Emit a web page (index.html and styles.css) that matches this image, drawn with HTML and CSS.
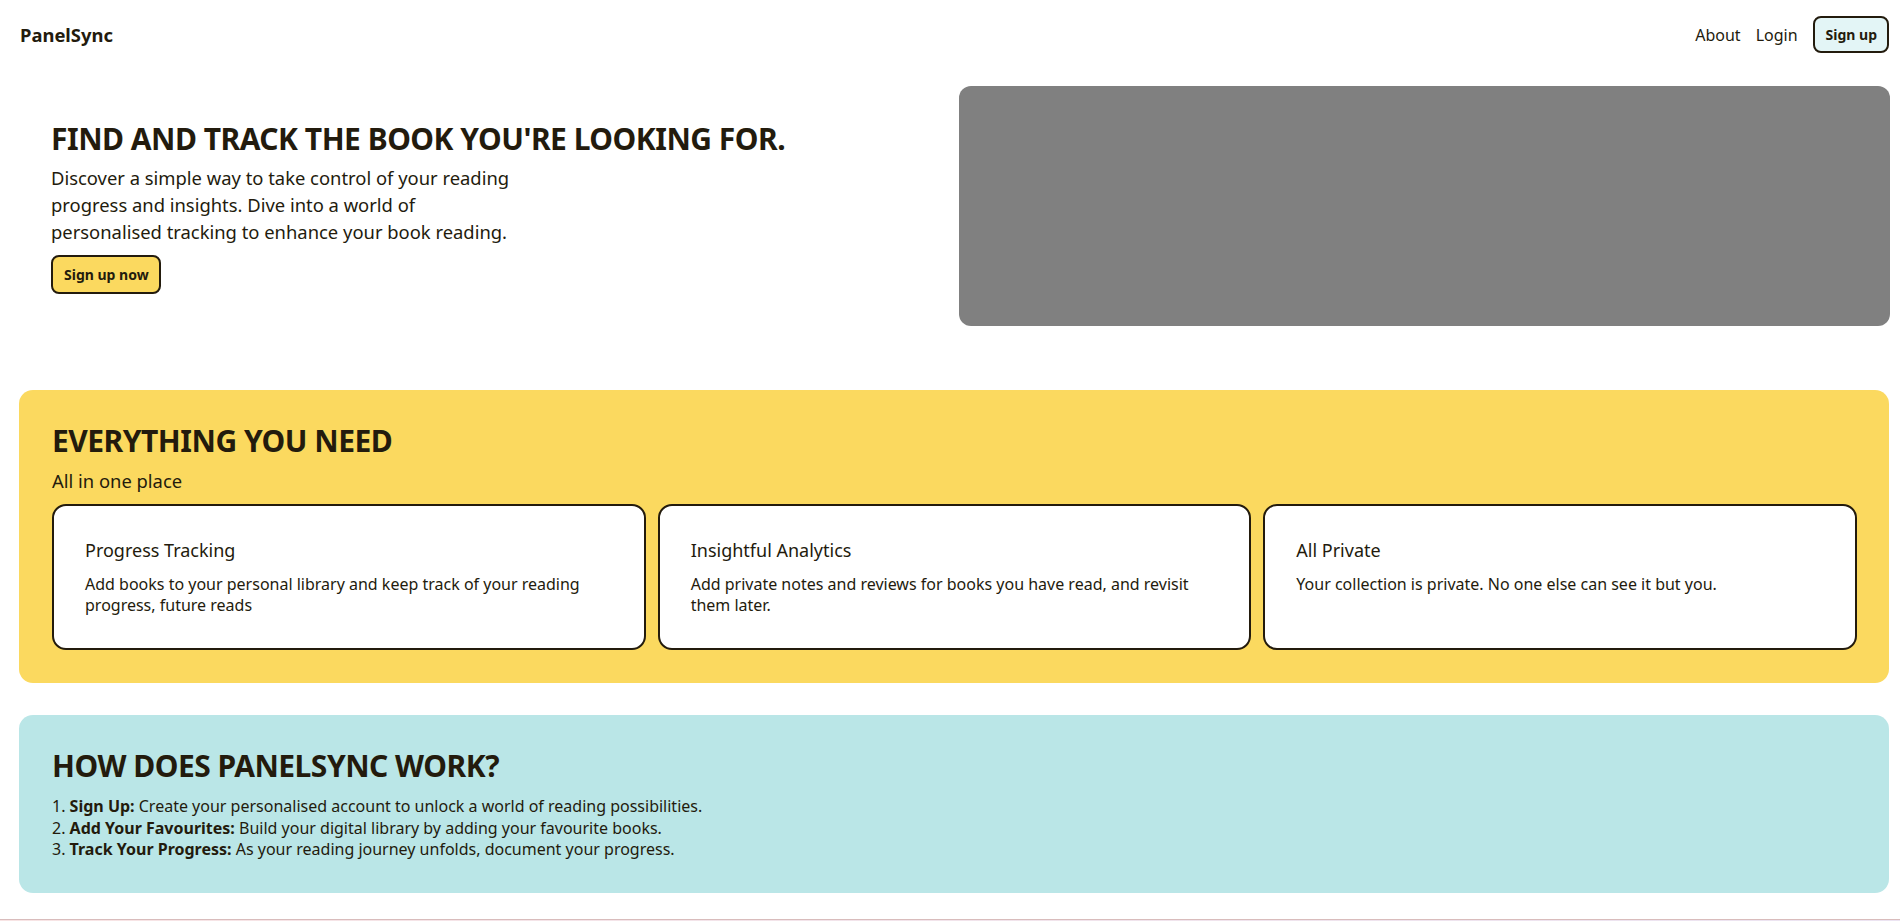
FILE: index.html
```html
<!DOCTYPE html>
<html lang="en">
<head>
<meta charset="utf-8">
<title>PanelSync</title>
<link rel="stylesheet" href="styles.css">
</head>
<body>
<header class="nav">
  <div class="brand">PanelSync</div>
  <nav class="nav-links">
    <a class="nav-link" href="#">About</a>
    <a class="nav-link" href="#">Login</a>
    <a class="btn btn-light" href="#">Sign up</a>
  </nav>
</header>
<main>
  <section class="hero">
    <div class="hero-text">
      <h1 class="title">FIND AND TRACK THE BOOK YOU'RE LOOKING FOR.</h1>
      <p class="lead">Discover a simple way to take control of your reading progress and insights. Dive into a world of personalised tracking to enhance your book reading.</p>
      <a class="btn btn-yellow" href="#">Sign up now</a>
    </div>
    <div class="hero-image"></div>
  </section>

  <section class="panel panel-yellow">
    <h2 class="title">EVERYTHING YOU NEED</h2>
    <p class="sub">All in one place</p>
    <div class="cards">
      <div class="card">
        <h3 class="card-title">Progress Tracking</h3>
        <p class="card-text">Add books to your personal library and keep track of your reading progress, future reads</p>
      </div>
      <div class="card">
        <h3 class="card-title">Insightful Analytics</h3>
        <p class="card-text">Add private notes and reviews for books you have read, and revisit them later.</p>
      </div>
      <div class="card">
        <h3 class="card-title">All Private</h3>
        <p class="card-text">Your collection is private. No one else can see it but you.</p>
      </div>
    </div>
  </section>

  <section class="panel panel-teal">
    <h2 class="title">HOW DOES PANELSYNC WORK?</h2>
    <ol class="steps">
      <li><b>Sign Up:</b> Create your personalised account to unlock a world of reading possibilities.</li>
      <li><b>Add Your Favourites:</b> Build your digital library by adding your favourite books.</li>
      <li><b>Track Your Progress:</b> As your reading journey unfolds, document your progress.</li>
    </ol>
  </section>
</main>
<footer class="footer"></footer>
</body>
</html>
```
FILE: styles.css
```css
* { box-sizing: border-box; }
html, body { margin: 0; padding: 0; }
body {
  font-family: "Noto Sans", "DejaVu Sans", sans-serif;
  color: #231b0d;
  background: #ffffff;
  padding: 0 11px 0 19px;
}
a { color: inherit; text-decoration: none; }

.nav {
  display: flex;
  align-items: center;
  justify-content: space-between;
  height: 69px;
}
.brand {
  font-weight: 700;
  font-size: 18.4px;
  padding-left: 1px;
}
.nav-links {
  display: flex;
  align-items: center;
  gap: 15px;
  font-size: 16px;
}
.btn {
  display: inline-block;
  font-weight: 700;
  font-size: 14px;
  line-height: 19px;
  border: 2px solid #231b0d;
  border-radius: 8px;
}
.btn-light {
  background: #e3f5f6;
  padding: 7px 10px 7px 11px;
}
.btn-yellow {
  background: #fbd95f;
  padding: 8px 10px 8px 11px;
}

.hero {
  display: flex;
  align-items: center;
  margin-top: 17px;
  padding-left: 32px;
}
.hero-text {
  flex: 1;
}
.title {
  font-size: 30px;
  font-weight: 700;
  line-height: 41px;
  letter-spacing: -0.5px;
  margin: 0;
}
.lead {
  font-size: 18.4px;
  line-height: 27px;
  margin: 5px 0 10px;
  max-width: 462px;
}
.hero-image {
  flex: 0 0 931px;
  height: 240px;
  background: #808080;
  border-radius: 12px;
  margin-right: -1px;
}

.panel {
  border-radius: 14px;
  padding: 30px 32px 32px 33px;
}
.panel-yellow {
  background: #fbd95f;
  margin-top: 64px;
  padding-bottom: 33px;
}
.panel-teal {
  background: #bae6e7;
  margin-top: 32px;
}
.sub {
  font-size: 18.4px;
  line-height: 24px;
  margin: 8px 0 11px;
}
.cards {
  display: grid;
  grid-template-columns: repeat(3, 1fr);
  gap: 12px;
}
.card {
  background: #ffffff;
  border: 2px solid #231b0d;
  border-radius: 14px;
  padding: 32px 31px 32px;
}
.card-title {
  font-size: 18px;
  font-weight: 400;
  line-height: 24px;
  margin: 0 0 12px;
}
.card-text {
  font-size: 16px;
  line-height: 21px;
  margin: 0;
}
.steps {
  margin: 10px 0 0;
  padding: 0;
  list-style-position: inside;
  font-size: 16px;
  line-height: 21.5px;
}

.footer {
  margin-top: 26px;
  margin-left: -19px;
  margin-right: -11px;
  height: 40px;
  border-top: 1px solid #d9bcbc;
  background: linear-gradient(90deg, #f8e4e4, #ece4f2);
}
```
